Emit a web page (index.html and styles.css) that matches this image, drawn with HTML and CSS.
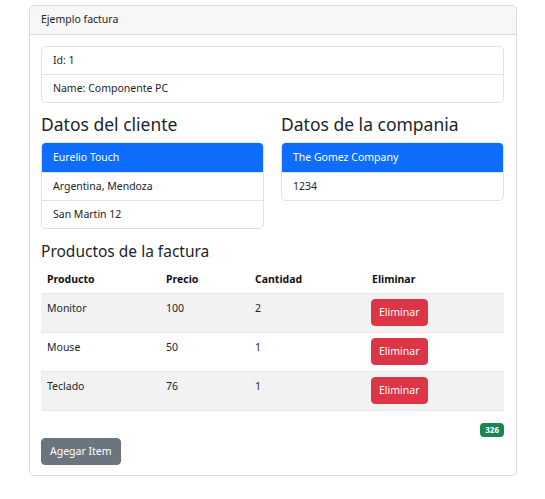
FILE: index.html
```html
<!DOCTYPE html>
<html lang="es">
<head>
<meta charset="utf-8">
<title>Ejemplo factura</title>
<link rel="stylesheet" href="styles.css">
</head>
<body>
<div class="card">
  <div class="card-header">Ejemplo factura</div>
  <div class="card-body">
    <ul class="list-group">
      <li class="list-item">Id: 1</li>
      <li class="list-item">Name: Componente PC</li>
    </ul>
    <div class="row">
      <div class="col">
        <h3 class="h3">Datos del cliente</h3>
        <ul class="list-group">
          <li class="list-item active">Eurelio Touch</li>
          <li class="list-item">Argentina, Mendoza</li>
          <li class="list-item">San Martin 12</li>
        </ul>
      </div>
      <div class="col">
        <h3 class="h3">Datos de la compania</h3>
        <ul class="list-group">
          <li class="list-item active">The Gomez Company</li>
          <li class="list-item">1234</li>
        </ul>
      </div>
    </div>
    <h4 class="h4">Productos de la factura</h4>
    <table class="table">
      <thead>
        <tr><th class="c1">Producto</th><th class="c2">Precio</th><th class="c3">Cantidad</th><th class="c4">Eliminar</th></tr>
      </thead>
      <tbody>
        <tr class="odd"><td>Monitor</td><td>100</td><td>2</td><td><button class="btn btn-danger">Eliminar</button></td></tr>
        <tr><td>Mouse</td><td>50</td><td>1</td><td><button class="btn btn-danger">Eliminar</button></td></tr>
        <tr class="odd"><td>Teclado</td><td>76</td><td>1</td><td><button class="btn btn-danger">Eliminar</button></td></tr>
      </tbody>
    </table>
    <div class="total"><span class="badge">326</span></div>
    <button class="btn btn-secondary">Agegar Item</button>
  </div>
</div>
</body>
</html>
```
FILE: styles.css
```css
* { box-sizing: border-box; }
html, body { margin: 0; padding: 0; background: #fff; }
body {
  padding: 5px 28px 0 29px;
  font-family: "Noto Sans", "Open Sans", sans-serif;
  font-size: 10.5px;
  line-height: 17px;
  color: #212529;
}
.card {
  border: 1px solid #dcdcdc;
  border-radius: 5px;
  background: #fff;
}
.card-header {
  background: #f7f7f7;
  border-bottom: 1px solid #dcdcdc;
  border-radius: 5px 5px 0 0;
  padding: 5px 11px 6px;
  height: 29px;
}
.card-body {
  padding: 11px 12px 10px 11px;
}
.list-group {
  list-style: none;
  margin: 0;
  padding: 0;
  border: 1px solid #e2e2e2;
  border-radius: 5px;
  overflow: hidden;
}
.list-item {
  padding: 5px 11px;
  height: 28px;
  border-top: 1px solid #e2e2e2;
}
.list-item:first-child { border-top: none; height: 27px; }
.list-item.active {
  background: #0d6efd;
  color: #fff;
  height: 29px;
  padding-top: 6px;
}
.row {
  display: flex;
  gap: 17px;
  margin-top: 10px;
}
.col { flex: 1; min-width: 0; }
.h3 {
  margin: 0 0 6px;
  font-size: 17.5px;
  line-height: 23px;
  font-weight: 400;
}
.h4 {
  margin: 12px 0 5px;
  font-size: 15.5px;
  line-height: 20px;
  font-weight: 400;
}
.table {
  width: 100%;
  border-collapse: collapse;
  table-layout: fixed;
}
.table th, .table td {
  text-align: left;
  vertical-align: top;
  padding: 5px 6px;
  border-bottom: 1px solid #e6e6e6;
}
.table th { font-weight: 700; color: #111; height: 27px; }
.table td { height: 39px; padding-top: 6px; }
.table tr.odd td { background: #f2f2f2; }
.table tr.odd td + td { box-shadow: inset 1px 0 0 #f6f6f6; }
.c1 { width: 119px; }
.c2 { width: 89px; }
.c3 { width: 117px; }
.btn {
  font-family: inherit;
  font-size: 10.5px;
  line-height: 17px;
  border: 1px solid transparent;
  border-radius: 4px;
  padding: 4px 7px;
  color: #fff;
  cursor: pointer;
}
.btn-danger { background: #dc3545; border-color: #dc3545; margin-top: -1px; margin-left: -1px; }
.btn-secondary { background: #6c757d; border-color: #6c757d; padding: 4px 8px; }
.total {
  display: flex;
  justify-content: flex-end;
  margin-top: 12px;
  height: 15px;
}
.badge {
  background: #198754;
  color: #fff;
  font-size: 8px;
  font-weight: 700;
  line-height: 8px;
  padding: 3px 5px;
  border-radius: 4px;
  height: 14px;
}
```
